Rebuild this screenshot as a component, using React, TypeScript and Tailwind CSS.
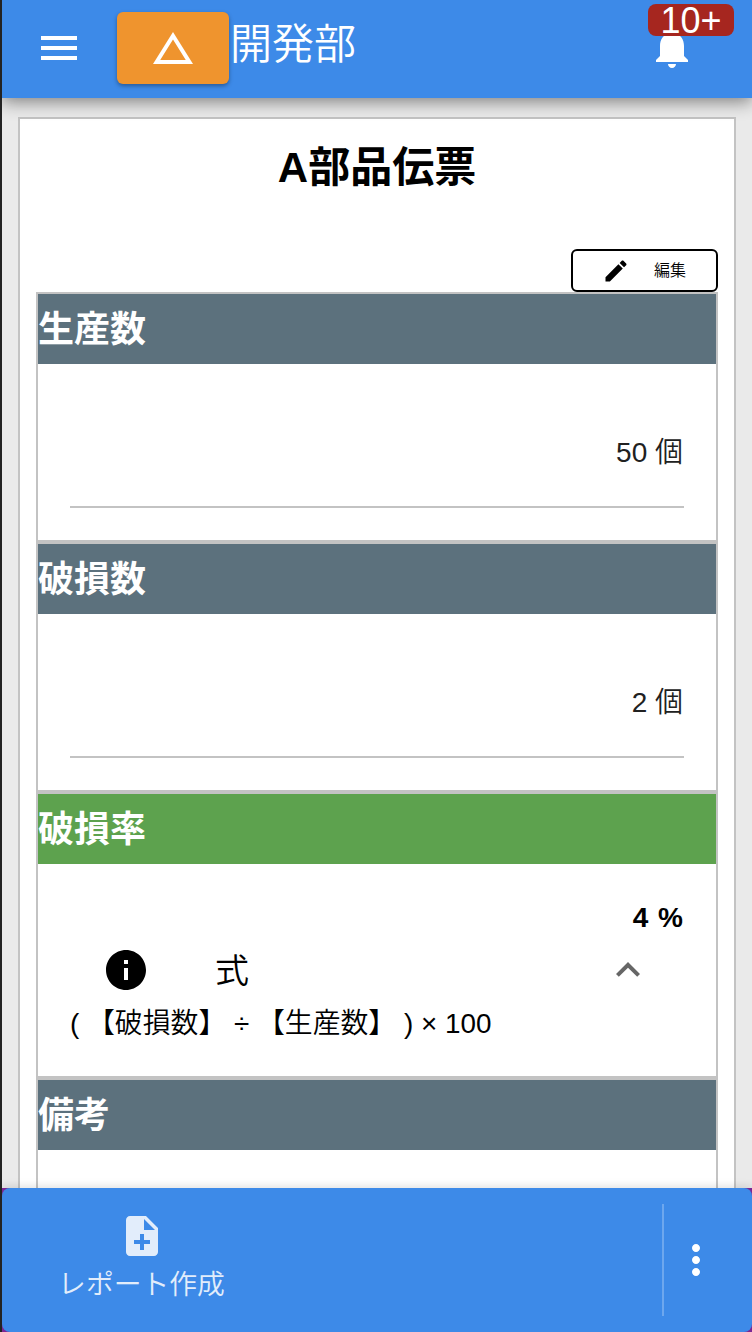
import type { ReactNode } from "react";

const paths = {
  menu: "M3 18h18v-2H3v2zm0-5h18v-2H3v2zm0-7v2h18V6H3z",
  triangle: "M12 7.77L18.39 18H5.61L12 7.77M12 4L2 20h20L12 4z",
  bell: "M12 22c1.1 0 2-.9 2-2h-4c0 1.1.89 2 2 2zm6-6v-5c0-3.07-1.64-5.64-4.5-6.32V4c0-.83-.67-1.5-1.5-1.5s-1.5.67-1.5 1.5v.68C7.63 5.36 6 7.92 6 11v5l-2 2v1h16v-1l-2-2z",
  edit: "M3 17.25V21h3.75L17.81 9.94l-3.75-3.75L3 17.25zM20.71 7.04c.39-.39.39-1.02 0-1.41l-2.34-2.34c-.39-.39-1.02-.39-1.41 0l-1.83 1.83 3.75 3.75 1.83-1.83z",
  info: "M12 2C6.48 2 2 6.48 2 12s4.48 10 10 10 10-4.48 10-10S17.52 2 12 2zm1 15h-2v-6h2v6zm0-8h-2V7h2v2z",
  up: "M7.41 15.41L12 10.83l4.59 4.58L18 14l-6-6-6 6z",
  noteAdd: "M14 2H6c-1.1 0-1.99.9-1.99 2L4 20c0 1.1.89 2 1.99 2H18c1.1 0 2-.9 2-2V8l-6-6zm2 14h-3v3h-2v-3H8v-2h3v-3h2v3h3v2zm-3-7V3.5L18.5 9H13z",
  more: "M12 8c1.1 0 2-.9 2-2s-.9-2-2-2-2 .9-2 2 .9 2 2 2zm0 2c-1.1 0-2 .9-2 2s.9 2 2 2 2-.9 2-2-.9-2-2-2zm0 6c-1.1 0-2 .9-2 2s.9 2 2 2 2-.9 2-2-.9-2-2-2z",
};

function Icon({ name, className = "size-12" }: { name: keyof typeof paths; className?: string }) {
  return (
    <svg viewBox="0 0 24 24" fill="currentColor" className={`shrink-0 ${className}`}>
      <path d={paths[name]} />
    </svg>
  );
}

function Section({
  title,
  height,
  color = "bg-[#5c717d]",
  children,
}: {
  title: string;
  height: string;
  color?: string;
  children?: ReactNode;
}) {
  return (
    <section className={`shrink-0 border-2 border-[#c3c3c3] ${height}`}>
      <h2 className={`flex h-[70px] items-center pt-0.5 text-[36px] leading-none font-bold text-white ${color}`}>
        {title}
      </h2>
      {children}
    </section>
  );
}

function Field({ children }: { children: ReactNode }) {
  return (
    <div className="mx-8 flex h-36 items-center justify-end border-b-2 border-[#c3c3c3] pt-9 pr-px text-[28px] leading-none text-[#212121]">
      {children}
    </div>
  );
}

export default function App() {
  return (
    <div className="flex h-[1332px] w-[752px] flex-col overflow-hidden border-l-2 border-[#232323] bg-[#eaeaea] font-['Liberation_Sans','Noto_Sans_CJK_JP',sans-serif] font-[350] text-black">
      <header className="relative z-10 flex h-[98px] shrink-0 items-start bg-[#3d8ae8] text-white shadow-[0_4px_16px_rgba(0,0,0,0.45)]">
        <button className="mt-6 ml-[33px]">
          <Icon name="menu" />
        </button>
        <button className="mt-3 ml-[34px] flex h-[72px] w-28 items-center justify-center rounded-md bg-[#ef942e] shadow-[0_2px_4px_rgba(0,0,0,0.35)]">
          <Icon name="triangle" />
        </button>
        <span className="mt-[15px] ml-px text-[42px] leading-[60px]">開発部</span>
        <button className="relative mt-6 mr-14 ml-auto">
          <Icon name="bell" />
          <span className="absolute -top-5 left-0 flex h-8 w-[86px] items-center justify-center rounded-lg bg-[#a6261f] pt-0.5 text-[36px] leading-none">
            10+
          </span>
        </button>
      </header>

      <main className="mx-4 mt-[19px] flex min-h-0 flex-1 flex-col overflow-hidden border-2 border-b-0 border-[#c3c3c3] bg-white px-4">
        <h1 className="mt-[19px] h-[60px] shrink-0 text-center text-[42px] leading-[60px] font-bold">A部品伝票</h1>
        <button className="mt-[51px] flex h-[43px] w-[147px] shrink-0 items-center self-end rounded-md border-2 border-black pl-[29px] text-base leading-none">
          <Icon name="edit" className="size-7" />
          <span className="ml-6 pt-px">編集</span>
        </button>
        <Section title="生産数" height="h-[250px]">
          <Field>50 個</Field>
        </Section>
        <Section title="破損数" height="h-[250px]">
          <Field>2 個</Field>
        </Section>
        <Section title="破損率" height="h-[286px]" color="bg-[#5da24e]">
          <div className="px-8 pt-9">
            <p className="h-[46px] pr-px text-right text-[28px] leading-9 font-bold [word-spacing:2px]">4 %</p>
            <div className="flex h-12 items-center px-8">
              <Icon name="info" />
              <span className="ml-[65px] pt-px text-[34px] leading-none">式</span>
              <Icon name="up" className="ml-auto size-12 text-[#666]" />
            </div>
            <p className="mt-2 text-[27.85px] leading-[44px] whitespace-nowrap">( 【破損数】 ÷ 【生産数】 ) × 100</p>
          </div>
        </Section>
        <Section title="備考" height="h-[250px]" />
      </main>

      <div className="z-10 shrink-0 bg-[#7b2794] shadow-[0_-2px_8px_rgba(0,0,0,0.12)]">
        <footer className="flex h-36 rounded-lg bg-[#3d8ae8] text-white">
          <button className="flex w-[279px] flex-col items-center pt-6 opacity-85">
            <Icon name="noteAdd" />
            <span className="mt-[9px] text-[27.8px] leading-8">レポート作成</span>
          </button>
          <div className="my-4 ml-auto w-0.5 bg-white/25" />
          <button className="mr-8 ml-2 self-center">
            <Icon name="more" />
          </button>
        </footer>
      </div>
    </div>
  );
}
